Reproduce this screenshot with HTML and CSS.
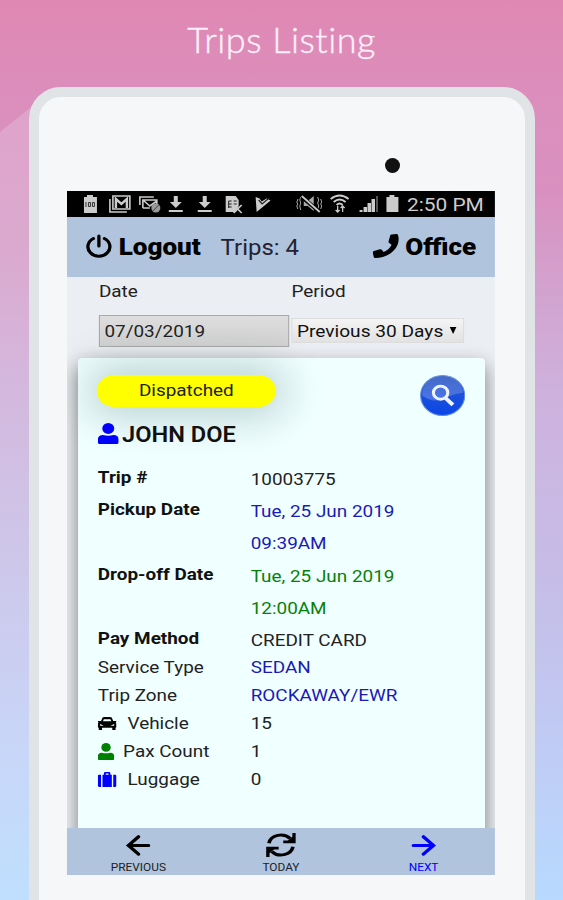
FILE: index.html
```html
<!DOCTYPE html>
<html lang="en">
<head>
  <meta charset="UTF-8">
  <title>Trips Listing</title>
  <link rel="stylesheet" href="styles.css">
</head>
<body>
  <div class="backdrop"></div>

  <h1>Trips Listing</h1>

  <div class="tablet">
    <div class="bezel"><span class="camera"></span></div>

    <div class="screen">
      <div class="status">
        <svg class="status-icons" viewBox="0 0 205 26" preserveAspectRatio="none" fill="#ccc">
          <path d="M17 6h3V4h6v2h4v16H17z"/>
          <path d="M19 11v5M21.500 11.500h2v4h-2zM25.500 11.500h2v4h-2z" stroke="#333" fill="none"/>
          <path d="M43 8v13h17M46 5h17v13H46z" stroke="#ccc" stroke-width="1.600" fill="none"/>
          <path d="M49 17V8l5.500 5L60 8v9" stroke="#ccc" stroke-width="2.400" fill="none"/>
          <path d="M73 14V6h14M76 17V9h14v5M76 9l7 6 7-5M76 17h7" stroke="#ccc" stroke-width="1.600" fill="none"/>
          <circle cx="89" cy="17" r="4.500" fill="#999"/><path d="M86 20l6-6" stroke="#444"/>
          <path d="M107 5h4v6h4l-6 6-6-6h4zM102 19h14v2h-14z"/>
          <path d="M136 5h4v6h4l-6 6-6-6h4zM131 19h14v2h-14z"/>
          <path d="M159 5h10l3 4v6l-3 6H159z"/>
          <path d="M162 10h3M162 13h3M162 16h3M167 10h3M167 13h3M162 10v7" stroke="#222" fill="none"/>
          <path d="M167 14l8 8M175 14l-8 8" stroke="#ccc" stroke-width="1.700"/>
          <path d="M189 6l4 1.500 2 3 5-3 4 2-14 11.500z"/>
          <path d="M192 9l3.500 4 7-6" stroke="#222" stroke-width="1.200" fill="none"/>
        </svg>
        <svg class="signal-icons" viewBox="0 0 106 26" preserveAspectRatio="none" fill="#ccc">
          <path d="M2 8v1l-1 2 1 2-1 2 1 3M5 6l-1 3 1 3-1 3 1 4M25 8l1 3-1 2 1 2-1 3M22 6l1 3-1 3 1 3-1 4" stroke="#aaa" fill="none"/>
          <path d="M8 10h4l6-5v15l-6-5H8z" fill="#aaa"/>
          <path d="M6 6l17 14" stroke="#000" stroke-width="4"/><path d="M6 5l18 16" stroke="#ccc" stroke-width="1.700"/>
          <path d="M35 8q9-7 18 0M38 11q6-5 12 0M41 14q3-3 6 0" stroke="#ccc" stroke-width="2" fill="none"/>
          <path d="M42 15v6M40 19l2 2 2-2M47 21v-6M45 17l2-2 2 2" stroke="#ccc" stroke-width="1.300" fill="none"/>
          <path d="M64 19h3v2h-3zM68 16h3.500v5h-3.500zM72 12h3.500v9h-3.500zM76 8h3.500v13h-3.500z"/><path d="M80.500 5h2v16h-2z" fill="#555"/>
          <path d="M91 6h3V4h5v2h4v15H91z"/>
        </svg>
        <span class="clock">2:50 PM</span>
      </div>

      <div class="header">
        <svg class="power" viewBox="0 0 24 24" fill="none" stroke="#000" stroke-width="3" stroke-linecap="round">
          <path d="M7 4.500a10 9.500 0 1 0 10 0M12 2v10"/>
        </svg>
        <b class="logout">Logout</b>
        <span class="count">Trips: 4</span>
        <svg class="phone" viewBox="0 0 24 24"><path d="M17 .5l4.500-.5q1.200 0 1.500 1.200C26 13 15 24 2.200 24Q1 24 .8 22.800L0 18.600q-.1-1.200 1-1.600l5.400-1.800q1.100-.3 1.800.6l1.600 2.200q5-2 7.300-7.300l-2.200-1.800q-.9-.8-.5-1.900L15.800 1.400Q16.100.6 17 .5z"/></svg>
        <b class="office">Office</b>
      </div>

      <div class="filters">
        <div class="field date">
          <label>Date</label>
          <div class="date-input">07/03/2019</div>
        </div>
        <div class="field">
          <label>Period</label>
          <div class="period-select">Previous 30 Days <i class="caret"></i></div>
        </div>
      </div>

      <div class="trips">
        <div class="card">
          <div class="card-top">
            <span class="badge">Dispatched</span>
            <svg class="search" viewBox="0 0 44 44">
              <defs>
                <linearGradient id="ball" x1="0" y1="0" x2="0" y2="1">
                  <stop offset="0" stop-color="#1745b8"/><stop offset=".5" stop-color="#1c50dc"/><stop offset="1" stop-color="#0a45e6"/>
                </linearGradient>
              </defs>
              <circle cx="22" cy="22" r="21.500" fill="url(#ball)" stroke="#5d8ce0"/>
              <path d="M2 22a20 20 0 0 1 40-3Q30 21 22 26 12 30 2 22z" fill="#fff" opacity=".2"/>
              <circle cx="20" cy="19" r="7" fill="none" stroke="#eef4ff" stroke-width="3"/>
              <path d="M25 25l7 7" stroke="#eef4ff" stroke-width="4"/>
            </svg>
          </div>

          <div class="name">
            <svg class="user" viewBox="0 0 20 22" preserveAspectRatio="none" fill="#00f"><ellipse cx="10" cy="5.700" rx="5.700" ry="5.700"/><path d="M0 20v-2.500Q0 12.700 5 12.500q5 1.600 10 0 5 .2 5 5V20q0 2-1.500 2H1.500q-1.500 0-1.500-2z"/></svg>
            JOHN DOE
          </div>

          <div class="details">
            <div class="row tall"><b>Trip #</b><span>10003775</span></div>
            <div class="row tall"><b>Pickup Date</b><span class="blue">Tue, 25 Jun 2019<br>09:39AM</span></div>
            <div class="row tall"><b>Drop-off Date</b><span class="green">Tue, 25 Jun 2019<br>12:00AM</span></div>
            <div class="row tall"><b>Pay Method</b><span>CREDIT CARD</span></div>
            <div class="row first"><span>Service Type</span><span class="blue">SEDAN</span></div>
            <div class="row"><span>Trip Zone</span><span class="blue">ROCKAWAY/EWR</span></div>
            <div class="row"><span class="with-icon">
              <svg class="car" viewBox="0 0 20 15" preserveAspectRatio="none"><path fill-rule="evenodd" d="M5 1Q5.500 0 7 0h6q1.500 0 2 1l1.500 3.500H20v1.500h-1q1 1 1 2.500v3q0 .8-1 1V15h-3.500v-2.500h-11V15H1v-2.500q-1-.2-1-1v-3Q0 7 1 6H0V4.500h3.500zM6.500 2.500L5.500 5h9l-1-2.500zM2.500 8v2h4zM17.500 8v2h-4z"/></svg>Vehicle</span><span>15</span></div>
            <div class="row"><span class="with-icon">
              <svg class="pax-icon" viewBox="0 0 20 22" preserveAspectRatio="none" fill="#008000"><ellipse cx="10" cy="5.700" rx="5.700" ry="5.700"/><path d="M0 20v-2.500Q0 12.700 5 12.500q5 1.600 10 0 5 .2 5 5V20q0 2-1.500 2H1.500q-1.500 0-1.500-2z"/></svg>Pax Count</span><span>1</span></div>
            <div class="row"><span class="with-icon">
              <svg class="bag" viewBox="0 0 20 16" preserveAspectRatio="none" fill="#00f"><path fill-rule="evenodd" d="M5 16V3h1.500V1.500Q6.500 0 8 0h4q1.500 0 1.500 1.500V3H15v13zM8.500 3h3V1.700h-3zM0 4.500Q0 3 1.500 3H3.500v13H1.500Q0 16 0 14.500zM20 4.500Q20 3 18.500 3H16.500v13h2q1.500 0 1.500-1.500z"/></svg>Luggage</span><span>0</span></div>
          </div>
        </div>
      </div>

      <div class="footer">
        <div class="nav">
          <svg viewBox="0 0 24 24" fill="none" stroke="#000" stroke-width="3.400" stroke-linecap="round"><path d="M12 3L2 12.500 12 22M2 12.500h20"/></svg>
          <span>PREVIOUS</span>
        </div>
        <div class="nav">
          <svg class="sync" viewBox="0 0 26 26" preserveAspectRatio="none"><path d="M2.500 11A10.500 10.500 0 0 1 21 6M23.500 15A10.500 10.500 0 0 1 5 20" fill="none" stroke="#000" stroke-width="3.200"/><path d="M26 0v11H15V8h4l4-4V0zM0 26V15h11v3H7l-4 4v4z"/></svg>
          <span>TODAY</span>
        </div>
        <div class="nav next">
          <svg viewBox="0 0 24 24" fill="none" stroke="#00f" stroke-width="3.400" stroke-linecap="round"><path d="M12 3l10 9.500L12 22M22 12.500H2"/></svg>
          <span>NEXT</span>
        </div>
      </div>
    </div>
  </div>
</body>
</html>
```

FILE: styles.css
```css
* {
  box-sizing: border-box;
}
body {
  margin: 0;
  height: 900px;
  overflow: hidden;
  position: relative;
  font-family: Roboto, "Liberation Sans", sans-serif;
  color: #222;
  background: linear-gradient(#e088b3 0, #db8fbd 110px, #d990c0 190px, #d2a4d0 300px, #ceb2de 400px, #c4c0ea 620px, #bfcdf6 760px, #b8dafe 900px);
}
.backdrop {
  position: absolute;
  left: 0;
  top: 108px;
  width: 30px;
  height: 792px;
  clip-path: polygon(0 24px, 100% 0, 100% 100%, 0 100%);
  background: linear-gradient(#dfa3cb 0, #dba9cf 140px, #d5b7dd 270px, #cfc3e6 400px, #cbcdf0 530px, #c8d6f8 640px, #c0dffe 792px);
}
h1 {
  margin: 0;
  height: 87px;
  padding-top: 17px;
  text-align: center;
  font: 300 36px/44px Lato, sans-serif;
  font-variant-ligatures: none;
  letter-spacing: .5px;
  -webkit-text-stroke: .4px #fdf0fa;
  color: #fdf0fa;
}
.tablet {
  position: relative;
  margin: 0 28px 0 29px;
  height: 850px;
  padding: 0 28px;
  border: 10px solid #e1e4e6;
  border-radius: 32px;
  background: #f5f7f9;
}
.bezel {
  height: 94px;
  padding: 61px 0 0 318px;
}
.camera {
  display: block;
  width: 15px;
  height: 15px;
  border-radius: 50%;
  background: #111;
}

/* screen content is stretched a little sideways */
.screen {
  width: 389px;
  height: 684px;
  display: flex;
  flex-direction: column;
  transform: scaleX(1.1);
  transform-origin: left top;
  font-size: 17.200px;
  background: #ebeef2;
}
.status {
  height: 26px;
  background: #000;
  display: flex;
  align-items: center;
}
.status-icons {
  width: 186px;
  height: 26px;
}
.signal-icons {
  width: 96px;
  height: 26px;
  margin-left: 22px;
}
.clock {
  margin-left: 5px;
  font-size: 19px;
  color: #ccc;
  white-space: nowrap;
}
.header {
  height: 60px;
  padding: 0 17px;
  display: flex;
  align-items: center;
  background: #b0c4de;
  color: #000;
}
.power {
  width: 24px;
  height: 26px;
  margin: -3px 6px 0 0;
}
.logout, .office {
  font-size: 23.700px;
  font-weight: 900;
}
.count {
  margin-left: 18px;
  font-size: 21.800px;
  color: #223;
}
.phone {
  width: 24px;
  height: 24px;
  margin: -2px 6px 0 auto;
}
.filters {
  height: 81px;
  padding-left: 29px;
  display: flex;
}
.field label {
  display: block;
  height: 38px;
  padding-top: 4px;
  line-height: 20px;
}
.date {
  width: 175px;
}
.date-input {
  width: 173px;
  height: 32px;
  padding-left: 4px;
  border: 1px solid #aaa;
  background: linear-gradient(#ddd, #d2d2d2);
  line-height: 30px;
}
.period-select {
  width: 157px;
  height: 25px;
  margin-top: 3px;
  padding-left: 4px;
  display: flex;
  align-items: center;
  border: 1px solid #ddd;
  background: linear-gradient(#f4f4f4, #e2e2e2);
  color: #111;
  font-size: 17.400px;
  white-space: nowrap;
}
.caret {
  margin-left: 6px;
  border: 3.500px solid transparent;
  border-top: 7px solid #000;
  border-bottom: 0;
}
.trips {
  flex: 1;
  overflow: hidden;
  margin-top: -30px;
  padding: 30px 9px 0 10px;
}
.card {
  height: 520px;
  padding: 17px 18px 0 17px;
  border-radius: 4px;
  background: #f0ffff;
  box-shadow: 0 8px 18px rgba(0, 0, 0, .48);
}
.card-top {
  display: flex;
  justify-content: space-between;
}
.badge {
  width: 163px;
  height: 32px;
  border-radius: 16px;
  background: #ff0;
  text-align: center;
  line-height: 31px;
  box-shadow: 0 0 40px 10px rgba(0, 50, 50, .22);
}
.search {
  width: 41px;
  height: 41px;
}
.name {
  height: 46px;
  margin-top: 1px;
  display: flex;
  font-size: 21.500px;
  font-weight: 600;
  line-height: 36px;
  color: #111;
}
.user {
  width: 19px;
  height: 21px;
  margin: 6px 3px 0 1px;
}
.row {
  display: flex;
  line-height: 28px;
}
.row > :first-child {
  width: 140px;
  padding-left: 1px;
}
.row > b {
  color: #111;
  font-weight: 700;
  position: relative;
  top: -2px;
}
.tall {
  line-height: 32.200px;
}
.first {
  margin-top: -3px;
}
.with-icon {
  display: flex;
  align-items: center;
}
.car {
  width: 17px;
  height: 13px;
  margin-right: 10px;
}
.pax-icon {
  width: 15px;
  height: 17px;
  margin-right: 8px;
}
.bag {
  width: 17px;
  height: 15px;
  margin-right: 10px;
}
.blue {
  color: #1a1ab4;
}
.green {
  color: #088008;
}
.footer {
  height: 47px;
  display: flex;
  background: #b0c4de;
}
.nav {
  flex: 1;
  display: flex;
  flex-direction: column;
  align-items: center;
  padding-top: 6px;
  font-size: 10.800px;
  line-height: 14px;
  color: #222;
}
.nav svg {
  width: 24px;
  height: 24px;
  margin-bottom: 5px;
}
.nav .sync {
  width: 27px;
  height: 26px;
  margin: -1px 0 4px;
}
.next {
  color: #00f;
}
```
